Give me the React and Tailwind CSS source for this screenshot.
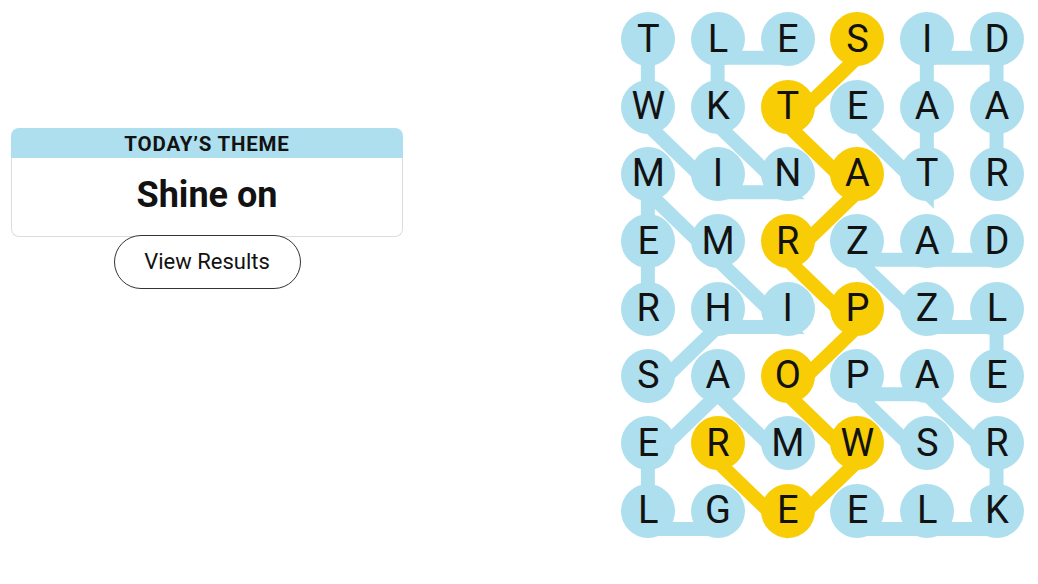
import React from 'react';

const COL = 69.74;
const ROW = 67.34;
const LINE_DROP = 18;

const letters = [
  'TLESID',
  'WKTEAA',
  'MINATR',
  'EMRZAD',
  'RHIPZL',
  'SAOPAE',
  'ERMWSR',
  'LGEELK',
];

// found words as [row, col] paths
const words = [
  { cells: [[0, 0], [1, 0], [2, 1], [2, 2], [1, 1], [0, 1], [0, 2]] },
  { cells: [[5, 0], [4, 1], [4, 2], [3, 1], [2, 0], [3, 0], [4, 0]] },
  { cells: [[2, 5], [1, 5], [0, 5], [0, 4], [1, 4], [2, 4], [1, 3]] },
  { cells: [[3, 5], [3, 4], [3, 3], [4, 4], [4, 5], [5, 5]] },
  { cells: [[7, 1], [7, 0], [6, 0], [5, 1], [6, 2]] },
  { cells: [[6, 4], [5, 3], [5, 4], [6, 5], [7, 5], [7, 4], [7, 3]] },
  { cells: [[0, 3], [1, 2], [2, 3], [3, 2], [4, 3], [5, 2], [6, 3], [7, 2], [6, 1]], spangram: true },
];

const spanCells = new Set(words.find((w) => w.spangram).cells.map(([r, c]) => `${r}-${c}`));

function toPoints(cells) {
  return cells
    .map(([r, c]) => `${(COL / 2 + c * COL).toFixed(2)},${(ROW / 2 + r * ROW + LINE_DROP).toFixed(2)}`)
    .join(' ');
}

function Board() {
  return (
    <div className="relative mt-[5.6px] w-[418.44px] h-[538.72px]">
      <svg
        className="absolute inset-0"
        width="418.44"
        height="538.72"
        viewBox="0 0 418.44 538.72"
      >
        {words.map((w, i) => (
          <polyline
            key={i}
            points={toPoints(w.cells)}
            fill="none"
            stroke={w.spangram ? '#f8cd05' : '#aedfee'}
            strokeWidth="14"
            strokeLinejoin="miter"
            strokeLinecap="butt"
          />
        ))}
      </svg>
      <div className="relative grid grid-cols-[repeat(6,69.74px)] grid-rows-[repeat(8,67.34px)]">
        {letters.map((row, r) =>
          row.split('').map((ch, c) => (
            <div key={`${r}-${c}`} className="flex items-center justify-center">
              <div
                className={
                  'w-[54px] h-[54px] rounded-full flex items-center justify-center text-[38px] leading-none text-[#121212] ' +
                  (spanCells.has(`${r}-${c}`) ? 'bg-[#f8cd05]' : 'bg-[#aedfee]')
                }
              >
                <span className="-mt-[1px]">{ch}</span>
              </div>
            </div>
          ))
        )}
      </div>
    </div>
  );
}

export default function App() {
  return (
    <div className="flex w-[1038px] h-[584px] bg-white overflow-hidden font-['Roboto',_'Liberation_Sans',_sans-serif] text-[#121212]">
      <div className="w-[613.4px] shrink-0">
        <div className="ml-[11px] mt-[127.5px] w-[392px] flex flex-col">
          <div className="h-[30px] rounded-t-[8px] bg-[#aedfee] flex items-center justify-center pt-[4px]">
            <span className="text-[20.5px] font-bold tracking-[0.8px] uppercase leading-none">Today’s Theme</span>
          </div>
          <div className="h-[79px] rounded-b-[8px] border-x border-b border-[#dcdcdc] flex items-center justify-center">
            <span className="text-[36px] font-bold leading-none -mt-[3px]">Shine on</span>
          </div>
          <button className="relative -mt-[2px] mx-auto w-[187px] h-[54px] rounded-full border border-[#333333] bg-white text-[22px] leading-none flex items-center justify-center pt-[1px]">
            View Results
          </button>
        </div>
      </div>
      <Board />
    </div>
  );
}
